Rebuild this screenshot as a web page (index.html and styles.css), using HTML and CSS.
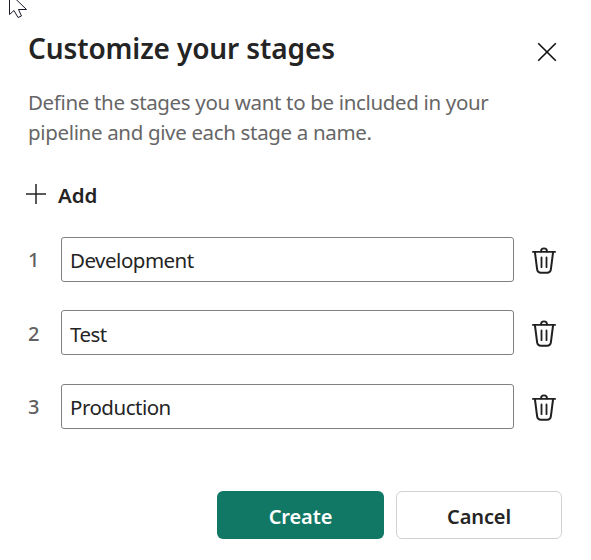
FILE: index.html
```html
<!DOCTYPE html>
<html lang="en">
<head>
<meta charset="utf-8">
<title>Customize your stages</title>
<link rel="stylesheet" href="styles.css">
</head>
<body>
<svg class="cursor" width="20" height="20" viewBox="0 0 20 20"><path d="M.5-5V14.5L5 10.5L9 17.5L12.5 16L9.5 9.5H17.5L2.5-5Z" fill="#fff" stroke="#1c1a2c" stroke-width="1"/></svg>
<main class="dialog">
  <header class="header">
    <h1 class="title">Customize your stages</h1>
    <button class="icon-button close" aria-label="Close"><svg width="20" height="20" viewBox="0 0 20 20"><path d="M1.2 1.2L18.8 18.8M18.8 1.2L1.2 18.8" stroke="#111" stroke-width="1.6"/></svg></button>
  </header>
  <p class="description">Define the stages you want to be included in your<br>pipeline and give each stage a name.</p>
  <button class="add"><svg width="20" height="20" viewBox="0 0 20 20"><path d="M10 0V20M0 10H20" stroke="#242424" stroke-width="1.5"/></svg><span>Add</span></button>
  <div class="stages">
    <div class="stage"><span class="number">1</span><div class="field">Development</div><button class="icon-button" aria-label="Delete"><svg width="24" height="27" viewBox="0 0 24 27"><use href="#trash"/></svg></button></div>
    <div class="stage"><span class="number">2</span><div class="field">Test</div><button class="icon-button" aria-label="Delete"><svg width="24" height="27" viewBox="0 0 24 27"><use href="#trash"/></svg></button></div>
    <div class="stage"><span class="number">3</span><div class="field">Production</div><button class="icon-button" aria-label="Delete"><svg width="24" height="27" viewBox="0 0 24 27"><use href="#trash"/></svg></button></div>
  </div>
  <footer class="actions">
    <button class="button primary">Create</button>
    <button class="button secondary">Cancel</button>
  </footer>
</main>
<svg class="symbols" width="0" height="0"><defs><g id="trash" fill="none" stroke="#202020" stroke-linecap="round" stroke-linejoin="round"><path d="M.9 4.9H23.1" stroke-width="1.8"/><path d="M9 4.6C9 .3 15 .3 15 4.6" stroke-width="1.9"/><path d="M2.9 5L5.1 22.2Q5.5 25.8 9 25.8H15Q18.5 25.8 18.9 22.2L21.1 5" stroke-width="2"/><path d="M9.5 10.5V20.2M14.5 10.5V20.2" stroke-width="1.8"/></g></defs></svg>
</body>
</html>
```

FILE: styles.css
```css
* { box-sizing: border-box; }
body {
  margin: 0;
  background: #fff;
  color: #242424;
  font-family: "Noto Sans", "Open Sans", sans-serif;
  font-size: 20.5px;
}
button {
  margin: 0;
  padding: 0;
  border: 0;
  background: none;
  color: inherit;
  font: inherit;
}
svg { display: block; flex: none; overflow: visible; }
.cursor { position: absolute; left: 9px; top: 0; }
.symbols { position: absolute; }
.dialog { height: 560px; padding: 28px 29px 0 28px; }
.header { display: flex; justify-content: space-between; height: 59px; }
.title {
  margin: 0;
  font-size: 28px;
  font-weight: 560;
  line-height: 40px;
  letter-spacing: -0.12px;
  white-space: nowrap;
}
.icon-button { display: flex; align-items: center; justify-content: center; }
.close { width: 20px; height: 20px; margin: 14px 5px 0 0; }
.description {
  margin: 0;
  color: #666;
  font-weight: 380;
  line-height: 30px;
  letter-spacing: -0.34px;
  white-space: nowrap;
}
.add {
  display: flex;
  align-items: center;
  gap: 12px;
  height: 30px;
  margin: 33px 0 0 -2px;
  font-weight: 560;
}
.add svg { margin-top: -3px; }
.stages { display: grid; gap: 28.5px; margin-top: 27px; }
.stage { display: flex; align-items: center; height: 45px; }
.number { width: 33px; color: #616161; font-size: 20px; font-weight: 530; }
.field {
  display: flex;
  align-items: center;
  width: 453px;
  height: 45px;
  padding: 0 0 0 8px;
  border: 1px solid #808080;
  border-radius: 3px;
  letter-spacing: -0.5px;
}
.stage:nth-child(2) .field { margin-top: -1px; padding-top: 3px; }
.stage .icon-button { width: 24px; margin: 1px 0 0 18px; }
.actions { display: flex; justify-content: flex-end; gap: 12px; margin-top: 62px; }
.button {
  height: 48px;
  padding-top: 2px;
  border-radius: 6px;
  font-size: 20px;
  font-weight: 560;
  letter-spacing: -0.1px;
}
.primary { width: 167px; background: #117865; color: #fff; }
.secondary { width: 166px; border: 1px solid #d1d1d1; }
```
